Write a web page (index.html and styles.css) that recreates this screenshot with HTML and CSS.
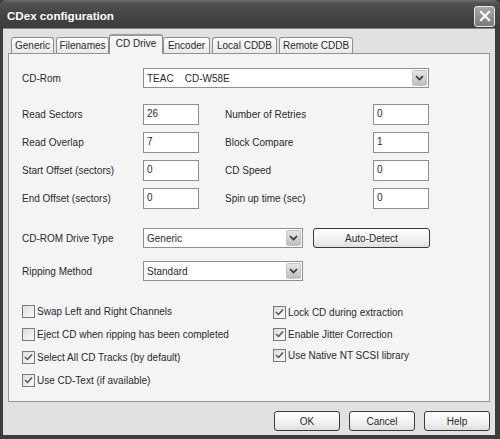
FILE: index.html
```html
<!DOCTYPE html>
<html>
<head>
<meta charset="utf-8">
<link rel="stylesheet" href="styles.css">
</head>
<body>
<div class="window">
  <div class="titlebar">
    <span class="title">CDex configuration</span>
    <div class="close">
      <svg width="14" height="14" viewBox="0 0 14 14"><path d="M3 3 L11 11 M11 3 L3 11" stroke="#fff" stroke-width="2.2" stroke-linecap="square"/></svg>
    </div>
  </div>
  <div class="frame">
    <div class="client">
      <div class="tabs">
        <div class="tab t-generic">Generic</div>
        <div class="tab t-filenames">Filenames</div>
        <div class="tab t-cddrive active">CD Drive</div>
        <div class="tab t-encoder">Encoder</div>
        <div class="tab t-local">Local CDDB</div>
        <div class="tab t-remote">Remote CDDB</div>
      </div>
      <div class="panel">
        <div class="row">
          <span class="label">CD-Rom</span>
          <div class="combo combo-wide"><span class="combo-text">TEAC    CD-W58E</span><span class="arrow"><svg width="9" height="6" viewBox="0 0 9 6"><path d="M1 1 L4.5 4.5 L8 1" fill="none" stroke="#333" stroke-width="1.6"/></svg></span></div>
        </div>
        <div class="grid">
          <span class="label">Read Sectors</span><div class="input">26</div><span class="label2">Number of Retries</span><div class="input">0</div>
          <span class="label">Read Overlap</span><div class="input">7</div><span class="label2">Block Compare</span><div class="input">1</div>
          <span class="label">Start Offset (sectors)</span><div class="input">0</div><span class="label2">CD Speed</span><div class="input">0</div>
          <span class="label">End Offset (sectors)</span><div class="input">0</div><span class="label2">Spin up time (sec)</span><div class="input">0</div>
        </div>
        <div class="row row-drive">
          <span class="label">CD-ROM Drive Type</span>
          <div class="combo combo-mid"><span class="combo-text">Generic</span><span class="arrow"><svg width="9" height="6" viewBox="0 0 9 6"><path d="M1 1 L4.5 4.5 L8 1" fill="none" stroke="#333" stroke-width="1.6"/></svg></span></div>
          <div class="btn btn-auto">Auto-Detect</div>
        </div>
        <div class="row row-rip">
          <span class="label">Ripping Method</span>
          <div class="combo combo-mid"><span class="combo-text">Standard</span><span class="arrow"><svg width="9" height="6" viewBox="0 0 9 6"><path d="M1 1 L4.5 4.5 L8 1" fill="none" stroke="#333" stroke-width="1.6"/></svg></span></div>
        </div>
        <div class="checks">
          <div class="col col-left">
            <div class="check"><span class="box"></span>Swap Left and Right Channels</div>
            <div class="check"><span class="box"></span>Eject CD when ripping has been completed</div>
            <div class="check"><span class="box"><svg width="11" height="11" viewBox="0 0 11 11"><path d="M2 5 L4.5 7.5 L9 2.5" fill="none" stroke="#555" stroke-width="1.5"/></svg></span>Select All CD Tracks (by default)</div>
            <div class="check"><span class="box"><svg width="11" height="11" viewBox="0 0 11 11"><path d="M2 5 L4.5 7.5 L9 2.5" fill="none" stroke="#555" stroke-width="1.5"/></svg></span>Use CD-Text (if available)</div>
          </div>
          <div class="col col-right">
            <div class="check"><span class="box"><svg width="11" height="11" viewBox="0 0 11 11"><path d="M2 5 L4.5 7.5 L9 2.5" fill="none" stroke="#555" stroke-width="1.5"/></svg></span>Lock CD during extraction</div>
            <div class="check"><span class="box"><svg width="11" height="11" viewBox="0 0 11 11"><path d="M2 5 L4.5 7.5 L9 2.5" fill="none" stroke="#555" stroke-width="1.5"/></svg></span>Enable Jitter Correction</div>
            <div class="check"><span class="box"><svg width="11" height="11" viewBox="0 0 11 11"><path d="M2 5 L4.5 7.5 L9 2.5" fill="none" stroke="#555" stroke-width="1.5"/></svg></span>Use Native NT SCSI library</div>
          </div>
        </div>
      </div>
      <div class="buttons">
        <div class="btn btn-dlg">OK</div>
        <div class="btn btn-dlg">Cancel</div>
        <div class="btn btn-dlg">Help</div>
      </div>
    </div>
  </div>
</div>
</body>
</html>
```

FILE: styles.css
```css
html, body {
  margin: 0;
  padding: 0;
  background: #fff;
}
body {
  font-family: "Liberation Sans", Arial, sans-serif;
  font-size: 10px;
  color: #2a2a2a;
}
.window {
  width: 500px;
  height: 439px;
  display: flex;
  flex-direction: column;
  background: #3c3c3c;
}
.titlebar {
  height: 28px;
  flex: none;
  display: flex;
  align-items: center;
  justify-content: space-between;
  padding: 0 5px 0 7px;
  background: linear-gradient(#6e6e6e 0, #525252 3px, #474747 40%, #3b3b3b 100%);
  border-radius: 6px 6px 0 0;
}
.title {
  color: #fff;
  font-weight: bold;
  font-size: 11.6px;
  padding-top: 3px;
}
.close {
  width: 19px;
  height: 19px;
  margin-top: 4px;
  border: 1px solid #e8e8e8;
  border-radius: 3px;
  background: linear-gradient(#a8a8a8, #7a7a7a);
  display: flex;
  align-items: center;
  justify-content: center;
}
.frame {
  flex: 1;
  padding: 0 5px 4px 3px;
  display: flex;
}
.client {
  flex: 1;
  background: #e1e1e1;
  padding: 5px 5px 0 5px;
  border-top: 1px solid #8a8a8a;
}
.tabs {
  display: flex;
  align-items: flex-end;
  height: 19px;
  padding-left: 3px;
  position: relative;
  z-index: 1;
}
.tab {
  height: 16px;
  box-sizing: border-box;
  border: 1px solid #8e8e8e;
  border-bottom: none;
  border-radius: 3px 3px 0 0;
  background: linear-gradient(#fdfdfd, #e9e9e9);
  text-align: center;
  line-height: 15px;
  color: #2a2a2a;
}
.tab.active {
  height: 20px;
  margin-bottom: -1px;
  background: #f4f4f4;
  line-height: 16px;
  border-top: 2px solid #9a9a9a;
}
.t-generic { width: 43px; margin-right: 2px; }
.t-filenames { width: 53px; }
.t-cddrive { width: 54px; }
.t-encoder { width: 47px; margin-right: 2px; }
.t-local { width: 65px; margin-right: 2px; }
.t-remote { width: 74px; }
.panel {
  box-sizing: border-box;
  height: 349px;
  border: 1px solid #939393;
  background: #f4f4f4;
  padding: 14px 0 0 13px;
}
.row {
  display: flex;
  align-items: center;
  height: 20px;
}
.label {
  width: 121px;
  flex: none;
}
.combo {
  box-sizing: border-box;
  height: 20px;
  border: 1px solid #8f8f8f;
  background: #fff;
  display: flex;
  align-items: center;
  justify-content: space-between;
}
.combo-wide { width: 286px; }
.combo-mid { width: 160px; }
.combo-text {
  padding-left: 3px;
  white-space: pre;
}
.arrow {
  box-sizing: border-box;
  width: 15px;
  height: 16px;
  margin-right: 1px;
  border: 1px solid #c4c4c4;
  border-radius: 2px;
  background: linear-gradient(#e6e6e6, #bdbdbd);
  display: flex;
  align-items: center;
  justify-content: center;
}
.grid {
  margin-top: 16px;
  display: grid;
  grid-template-columns: 121px 56px 174px 56px;
  grid-auto-rows: 21px;
  row-gap: 7px;
  align-items: center;
}
.label2 {
  padding-left: 26px;
}
.input {
  box-sizing: border-box;
  height: 21px;
  border: 1px solid #8f8f8f;
  background: #fff;
  padding: 3px 0 0 3px;
  line-height: 12px;
}
.row-drive { margin-top: 19px; }
.row-rip { margin-top: 13px; }
.btn {
  box-sizing: border-box;
  height: 20px;
  border: 1px solid #3a3a3a;
  border-radius: 3px;
  background: linear-gradient(#fefefe, #f0f0f0 60%, #dedede);
  display: flex;
  align-items: center;
  justify-content: center;
  color: #2a2a2a;
}
.btn-auto {
  width: 117px;
  margin-left: 10px;
}
.checks {
  margin-top: 24px;
  display: flex;
}
.col {
  display: flex;
  flex-direction: column;
}
.col-left {
  width: 251px;
  gap: 10px;
}
.col-right {
  gap: 8.5px;
  margin-top: 1px;
}
.check {
  display: flex;
  align-items: center;
  height: 13px;
  white-space: nowrap;
}
.box {
  box-sizing: border-box;
  width: 13px;
  height: 13px;
  margin-right: 2px;
  border: 1px solid #7a7a7a;
  background: linear-gradient(135deg, #dcdcdc, #fafafa);
  display: flex;
  align-items: center;
  justify-content: center;
}
.buttons {
  margin-top: 9px;
  display: flex;
  justify-content: flex-end;
  gap: 9px;
}
.btn-dlg {
  width: 66px;
}
```
